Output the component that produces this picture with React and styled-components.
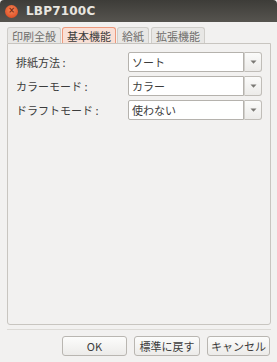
import React from "react";
import styled, { createGlobalStyle } from "styled-components";

const Global = createGlobalStyle`
  *, *::before, *::after { box-sizing: border-box; }
  html, body { margin: 0; padding: 0; background: #f2f1f0; }
  body { font-family: "Noto Sans CJK JP", "Noto Sans", sans-serif; }
`;

const Window = styled.div`
  width: 277px;
  height: 362px;
  display: flex;
  flex-direction: column;
  background: #f2f1f0;
  overflow: hidden;
`;

const TitleBar = styled.div`
  height: 22px;
  flex: none;
  display: flex;
  align-items: center;
  gap: 8px;
  padding-left: 5px;
  background: linear-gradient(#3d3c38, #56544f);
  border-radius: 4px 4px 0 0;
`;

const CloseBtn = styled.div`
  width: 13px;
  height: 13px;
  border-radius: 50%;
  background: radial-gradient(circle at 50% 40%, #f58a5a, #e0542a 70%, #b8401c);
  display: flex;
  align-items: center;
  justify-content: center;
  color: #7a2a12;
  font: bold 8px "DejaVu Sans", sans-serif;
  line-height: 1;
`;

const Title = styled.div`
  color: #e8e6e0;
  font: bold 12px "DejaVu Sans", sans-serif;
  letter-spacing: 0.2px;
`;

const Body = styled.div`
  flex: 1;
  display: flex;
  flex-direction: column;
  padding: 5px 6px 0 7px;
`;

const Tabs = styled.div`
  display: flex;
  align-items: flex-end;
  gap: 1px;
  height: 16px;
`;

const Tab = styled.div`
  height: 16px;
  padding: 0 4px;
  display: flex;
  align-items: center;
  font-size: 11px;
  color: ${(p) => (p.$active ? "#3c3c3c" : "#6f6e6b")};
  background: ${(p) => (p.$active ? "#f9e0d6" : "#e8e7e5")};
  border: 1px solid ${(p) => (p.$active ? "#ee9a7d" : "#cfcdc9")};
  border-bottom: none;
  border-radius: 3px 3px 0 0;
  margin-left: ${(p) => p.$ml || 0}px;
`;

const Panel = styled.div`
  height: 282px;
  flex: none;
  border: 1px solid #c8c5c0;
  border-radius: 0 0 3px 3px;
  background: #f2f1f0;
  padding: 8px 7px 0 7px;
  display: grid;
  grid-template-columns: 113px 134px;
  grid-auto-rows: 20px;
  row-gap: 4px;
  align-content: start;
`;

const Label = styled.div`
  font-size: 11px;
  color: #3c3c3c;
  display: flex;
  align-items: center;
  padding-left: 1px;
`;

const Combo = styled.div`
  display: flex;
  height: 20px;
`;

const Entry = styled.div`
  flex: 1;
  background: #ffffff;
  border: 1px solid #b5b2ad;
  border-radius: 2px 0 0 2px;
  font-size: 11px;
  color: #3c3c3c;
  display: flex;
  align-items: center;
  padding-left: 3px;
`;

const Arrow = styled.div`
  width: 18px;
  border: 1px solid #c0bdb8;
  border-left: 1px solid #d2d0cc;
  border-radius: 0 3px 3px 0;
  background: linear-gradient(#fbfbfa, #ecebe9);
  display: flex;
  align-items: center;
  justify-content: center;
`;

const Footer = styled.div`
  margin-top: 4px;
  border-top: 1px solid #dcdad6;
  display: flex;
  justify-content: flex-end;
  gap: 7px;
  padding: 6px 1px 0 0;
`;

const Button = styled.div`
  width: ${(p) => p.$w}px;
  height: 20px;
  border: 1px solid #b9b6b1;
  border-radius: 3px;
  background: linear-gradient(#fcfcfb, #ecebe9);
  display: flex;
  align-items: center;
  justify-content: center;
  font-size: 11px;
  color: #3c3c3c;
`;

const Tri = () => (
  <svg width="7" height="4" viewBox="0 0 7 4">
    <path d="M0.5 0.5 L6.5 0.5 L3.5 3.8 Z" fill="#7a7874" />
  </svg>
);

const rows = [
  ["排紙方法 :", "ソート"],
  ["カラーモード :", "カラー"],
  ["ドラフトモード :", "使わない"],
];

export default function App() {
  return (
    <Window>
      <Global />
      <TitleBar>
        <CloseBtn>×</CloseBtn>
        <Title>LBP7100C</Title>
      </TitleBar>
      <Body>
        <Tabs>
          <Tab>印刷全般</Tab>
          <Tab $active>基本機能</Tab>
          <Tab>給紙</Tab>
          <Tab $ml={1}>拡張機能</Tab>
        </Tabs>
        <Panel>
          {rows.map(([l, v]) => (
            <React.Fragment key={l}>
              <Label>{l}</Label>
              <Combo>
                <Entry>{v}</Entry>
                <Arrow>
                  <Tri />
                </Arrow>
              </Combo>
            </React.Fragment>
          ))}
        </Panel>
        <Footer>
          <Button $w={65}>OK</Button>
          <Button $w={66}>標準に戻す</Button>
          <Button $w={63}>キャンセル</Button>
        </Footer>
      </Body>
    </Window>
  );
}
